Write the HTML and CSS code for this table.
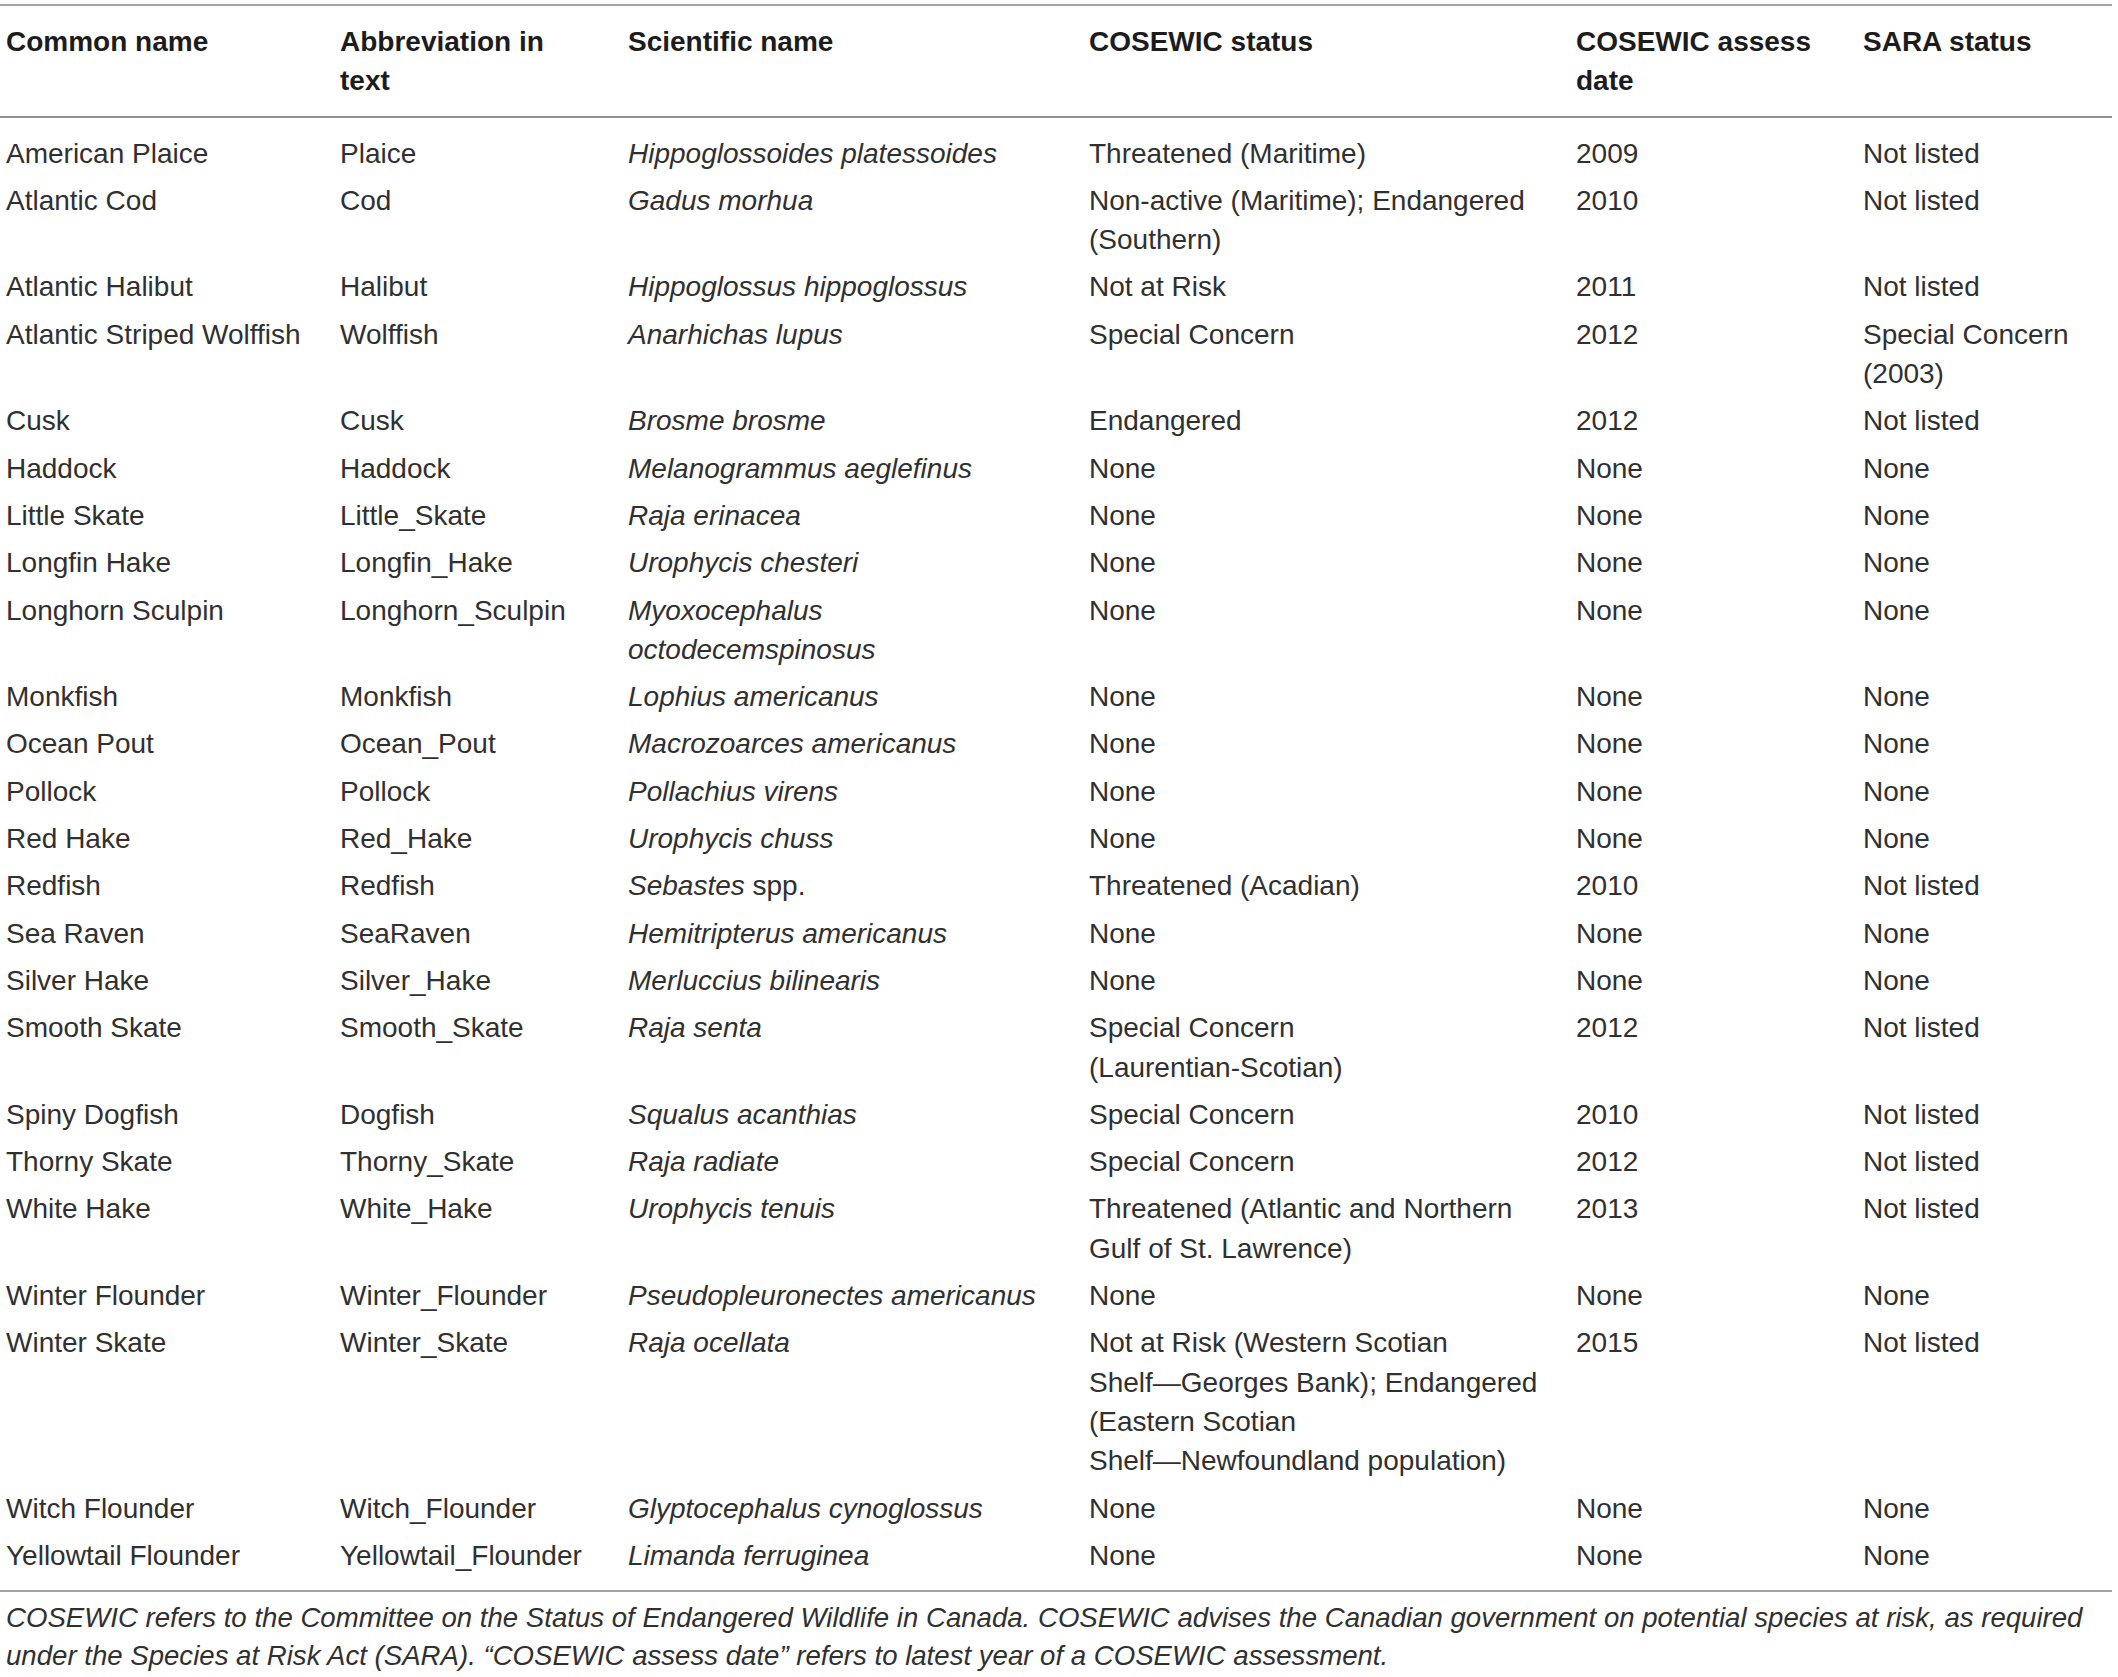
FILE: index.html
```html
<!DOCTYPE html>
<html lang="en">
<head>
<meta charset="utf-8">
<title>Species table</title>
<link rel="stylesheet" href="styles.css">
</head>
<body>
<table class="species">
  <colgroup>
    <col class="c1"><col class="c2"><col class="c3"><col class="c4"><col class="c5"><col class="c6">
  </colgroup>
  <thead>
    <tr>
      <th>Common name</th>
      <th>Abbreviation in text</th>
      <th>Scientific name</th>
      <th>COSEWIC status</th>
      <th>COSEWIC assess date</th>
      <th>SARA status</th>
    </tr>
  </thead>
  <tbody>
    <tr><td>American Plaice</td><td>Plaice</td><td><i>Hippoglossoides platessoides</i></td><td>Threatened (Maritime)</td><td>2009</td><td>Not listed</td></tr>
    <tr><td>Atlantic Cod</td><td>Cod</td><td><i>Gadus morhua</i></td><td>Non-active (Maritime); Endangered (Southern)</td><td>2010</td><td>Not listed</td></tr>
    <tr><td>Atlantic Halibut</td><td>Halibut</td><td><i>Hippoglossus hippoglossus</i></td><td>Not at Risk</td><td>2011</td><td>Not listed</td></tr>
    <tr><td>Atlantic Striped Wolffish</td><td>Wolffish</td><td><i>Anarhichas lupus</i></td><td>Special Concern</td><td>2012</td><td>Special Concern (2003)</td></tr>
    <tr><td>Cusk</td><td>Cusk</td><td><i>Brosme brosme</i></td><td>Endangered</td><td>2012</td><td>Not listed</td></tr>
    <tr><td>Haddock</td><td>Haddock</td><td><i>Melanogrammus aeglefinus</i></td><td>None</td><td>None</td><td>None</td></tr>
    <tr><td>Little Skate</td><td>Little_Skate</td><td><i>Raja erinacea</i></td><td>None</td><td>None</td><td>None</td></tr>
    <tr><td>Longfin Hake</td><td>Longfin_Hake</td><td><i>Urophycis chesteri</i></td><td>None</td><td>None</td><td>None</td></tr>
    <tr><td>Longhorn Sculpin</td><td>Longhorn_Sculpin</td><td><i>Myoxocephalus octodecemspinosus</i></td><td>None</td><td>None</td><td>None</td></tr>
    <tr><td>Monkfish</td><td>Monkfish</td><td><i>Lophius americanus</i></td><td>None</td><td>None</td><td>None</td></tr>
    <tr><td>Ocean Pout</td><td>Ocean_Pout</td><td><i>Macrozoarces americanus</i></td><td>None</td><td>None</td><td>None</td></tr>
    <tr><td>Pollock</td><td>Pollock</td><td><i>Pollachius virens</i></td><td>None</td><td>None</td><td>None</td></tr>
    <tr><td>Red Hake</td><td>Red_Hake</td><td><i>Urophycis chuss</i></td><td>None</td><td>None</td><td>None</td></tr>
    <tr><td>Redfish</td><td>Redfish</td><td><i>Sebastes</i> spp.</td><td>Threatened (Acadian)</td><td>2010</td><td>Not listed</td></tr>
    <tr><td>Sea Raven</td><td>SeaRaven</td><td><i>Hemitripterus americanus</i></td><td>None</td><td>None</td><td>None</td></tr>
    <tr><td>Silver Hake</td><td>Silver_Hake</td><td><i>Merluccius bilinearis</i></td><td>None</td><td>None</td><td>None</td></tr>
    <tr><td>Smooth Skate</td><td>Smooth_Skate</td><td><i>Raja senta</i></td><td>Special Concern (Laurentian-&#8288;Scotian)</td><td>2012</td><td>Not listed</td></tr>
    <tr><td>Spiny Dogfish</td><td>Dogfish</td><td><i>Squalus acanthias</i></td><td>Special Concern</td><td>2010</td><td>Not listed</td></tr>
    <tr><td>Thorny Skate</td><td>Thorny_Skate</td><td><i>Raja radiate</i></td><td>Special Concern</td><td>2012</td><td>Not listed</td></tr>
    <tr><td>White Hake</td><td>White_Hake</td><td><i>Urophycis tenuis</i></td><td>Threatened (Atlantic and Northern Gulf of St. Lawrence)</td><td>2013</td><td>Not listed</td></tr>
    <tr><td>Winter Flounder</td><td>Winter_Flounder</td><td><i>Pseudopleuronectes americanus</i></td><td>None</td><td>None</td><td>None</td></tr>
    <tr><td>Winter Skate</td><td>Winter_Skate</td><td><i>Raja ocellata</i></td><td>Not at Risk (Western Scotian Shelf&#8288;—&#8288;Georges Bank); Endangered (Eastern Scotian Shelf&#8288;—&#8288;Newfoundland population)</td><td>2015</td><td>Not listed</td></tr>
    <tr><td>Witch Flounder</td><td>Witch_Flounder</td><td><i>Glyptocephalus cynoglossus</i></td><td>None</td><td>None</td><td>None</td></tr>
    <tr><td>Yellowtail Flounder</td><td>Yellowtail_Flounder</td><td><i>Limanda ferruginea</i></td><td>None</td><td>None</td><td>None</td></tr>
  </tbody>
</table>
<p class="note">COSEWIC refers to the Committee on the Status of Endangered Wildlife in Canada. COSEWIC advises the Canadian government on potential species at risk, as required under the Species at Risk Act (SARA). “COSEWIC assess date” refers to latest year of a COSEWIC assessment.</p>
</body>
</html>
```
FILE: styles.css
```css
html, body {
  margin: 0;
  padding: 0;
  background: #ffffff;
}

body {
  font-family: "Liberation Sans", Arial, sans-serif;
  color: #303030;
}

.species {
  margin-top: 4px;
  width: 2112px;
  table-layout: fixed;
  border-collapse: collapse;
  font-size: 28px;
  line-height: 39.3px;
}

.c1 { width: 334px; }
.c2 { width: 288px; }
.c3 { width: 461px; }
.c4 { width: 487px; }
.c5 { width: 287px; }
.c6 { width: 255px; }

.species thead tr {
  border-top: 2px solid #a3a3a3;
  border-bottom: 2px solid #8f8f8f;
}

.species th {
  text-align: left;
  vertical-align: top;
  font-weight: bold;
  color: #1c1c1c;
  padding: 16px 6px 15px 6px;
}

.species td {
  vertical-align: top;
  padding: 4px 6px 4px 6px;
}

.species tbody tr:first-child td { padding-top: 16px; }
.species tbody tr:last-child td { padding-bottom: 15px; }
.species tbody tr:last-child { border-bottom: 2px solid #a3a3a3; }

.species th:nth-child(2), .species td:nth-child(2) { padding-right: 32px; }
.species th:nth-child(3), .species td:nth-child(3) { padding-right: 35px; }
.species th:nth-child(4), .species td:nth-child(4) { padding-right: 23px; }
.species th:nth-child(5), .species td:nth-child(5) { padding-right: 31px; }

.species i { font-style: italic; }

.note {
  margin: 7px 0 0 0;
  padding: 0 0 0 6px;
  width: 2106px;
  font-size: 27.6px;
  line-height: 38px;
  font-style: italic;
  color: #303030;
}
```
